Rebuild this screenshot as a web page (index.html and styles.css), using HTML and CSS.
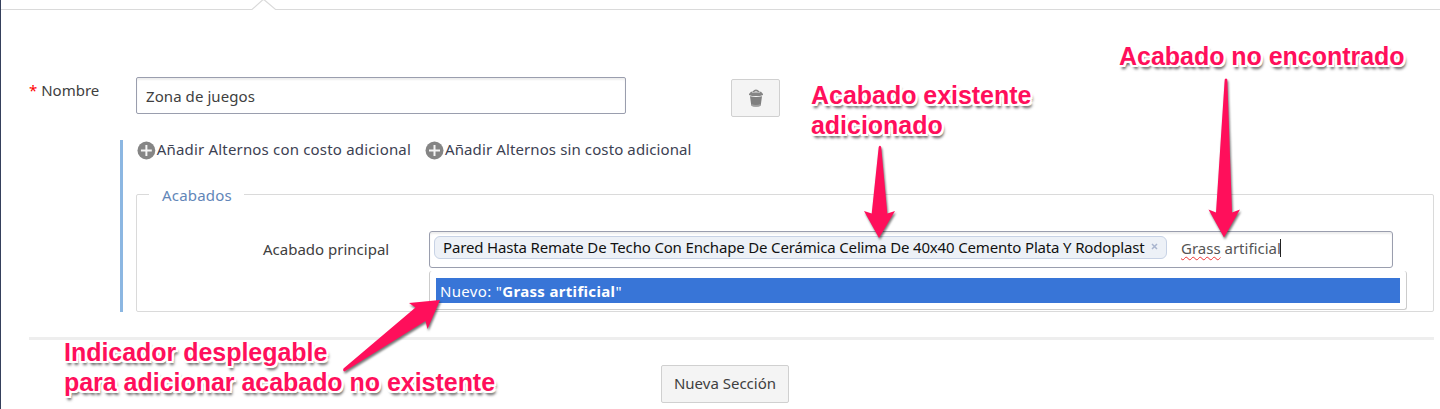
FILE: index.html
```html
<!DOCTYPE html>
<html lang="es">
<head>
<meta charset="utf-8">
<title>Acabados</title>
<link rel="stylesheet" href="styles.css">
</head>
<body>
<main class="page">
  <header class="tabline">
    <svg class="notch" width="28" height="11" viewBox="0 0 28 11"><path d="M1 11V9.500L4 8.500L14 0L24 8.500L27 9.500V11Z" fill="#fff"/><path d="M0 9.500H2L12 0.500Q13.500 -1 15 0.500L25.500 9.500H28" fill="none" stroke="#dadada" stroke-width="1.100"/></svg>
  </header>
  <div class="row">
    <label class="label"><span class="required">*</span> <span class="t-nombre">Nombre</span></label>
    <div class="field"><span class="t-zona">Zona de juegos</span></div>
    <button class="btn trash" aria-label="Eliminar">
      <svg width="16" height="20" viewBox="0 0 16 20"><path d="M5 4Q8 .5 11 4" fill="none" stroke="#858585" stroke-width="1.300"/><path d="M1 6L3 3.700H13L15 6V7L12 8H4L1 7Z" fill="#858585"/><path d="M4 4.500H12" stroke="#c4c4c4" stroke-width=".8"/><path d="M2 8.300Q8 9.800 14 8.300L12.800 17Q12.500 18.500 8 18.500Q3.500 18.500 3.200 17Z" fill="#808080"/><path d="M3.400 16Q8 18 12.600 16L12.300 18Q8 19.500 3.700 18Z" fill="#a0a0a0"/></svg>
    </button>
  </div>
  <section class="detail">
    <div class="links">
      <a class="link"><svg class="plus" width="19" height="19" viewBox="0 0 19 19"><circle cx="9.500" cy="9.500" r="9" fill="#858585"/><path d="M9.500 4V15M4 9.500H15" stroke="#f4f4f4" stroke-width="2"/></svg><span class="t-con">Añadir Alternos con costo adicional</span></a>
      <a class="link"><svg class="plus" width="19" height="19" viewBox="0 0 19 19"><circle cx="9.500" cy="9.500" r="9" fill="#858585"/><path d="M9.500 4V15M4 9.500H15" stroke="#f4f4f4" stroke-width="2"/></svg><span class="t-sin">Añadir Alternos sin costo adicional</span></a>
    </div>
    <div class="group">
      <span class="legend"><span class="t-acabados">Acabados</span></span>
      <span class="group-label"><span class="t-principal">Acabado principal</span></span>
      <div class="combo">
        <span class="tag"><span class="t-tag">Pared Hasta Remate De Techo Con Enchape De Cerámica Celima De 40x40 Cemento Plata Y Rodoplast</span><svg class="close" width="7" height="7" viewBox="0 0 7 7"><path d="M1 1L6 6M6 1L1 6" stroke="#a9b5cf" stroke-width="1.500"/></svg></span>
        <span class="typed"><span class="t-typed"><span class="misspelled">Grass</span> artificial</span></span><i class="caret"></i>
        <div class="dropdown"><div class="option"><span class="t-option">Nuevo: "<b>Grass artificial</b>"</span></div></div>
      </div>
    </div>
  </section>
  <hr class="rule">
  <div class="actions"><button class="btn new"><span class="t-new">Nueva Sección</span></button></div>
</main>
<div class="notes">
  <svg class="arrows" width="1440" height="409" viewBox="0 0 1440 409">
    <g fill="#ff0f5b">
      <path d="M878.700 147Q879.900 144.500 881.200 147L887.300 213.500L895 211L879 238L864 211L871.700 213.500Z"/>
      <path d="M1224.700 79.500Q1226 77.500 1227.300 79.500L1232 212.500L1240 209.500L1224 237.500L1208.500 209.500L1216 212.500Z"/>
      <path d="M344.500 371.500Q342.500 371 343.500 368.500L415.500 307.500L409 303L440 300L427.500 329L425.500 321Z"/>
    </g>
  </svg>
  <p class="note existing">Acabado existente<br>adicionado</p>
  <p class="note missing">Acabado no encontrado</p>
  <p class="note hint">Indicador desplegable<br>para adicionar acabado no existente</p>
</div>
</body>
</html>
```
FILE: styles.css
```css
* { box-sizing: border-box; }
body { margin: 0; background: #fff; color: #404040; font: 15px/20px "Noto Sans", "Open Sans", sans-serif; }
.page { height: 409px; overflow: hidden; border-left: 1px solid #35405c; }
.tabline { position: relative; height: 10px; border-bottom: 1px solid #dadada; }
.notch { position: absolute; left: 249px; top: 0; }
.row { display: flex; align-items: flex-start; margin-top: 67px; padding-left: 28px; }
.label { width: 107px; padding-top: 3px; white-space: nowrap; }
.required { color: #f00; }
.field { width: 490px; height: 37px; padding: 8px 9px 0; border: 1px solid #9a9eae; border-radius: 2px; box-shadow: inset 0 2px 2px #eee; }
.t-zona { letter-spacing: .07px; }
.btn { display: flex; align-items: center; justify-content: center; padding: 0; height: 38px; border: 1px solid #d0d0d0; border-radius: 2px; background: #f4f4f4; color: #404040; font: inherit; }
.trash { width: 49px; margin: 2px 0 0 105px; padding: 0 0 1px 1px; }
.detail { margin: 23px 6px 0 119px; border-left: 3px solid #8cb7e2; padding-left: 13px; height: 172px; }
.links { display: flex; gap: 14px; height: 54px; padding-left: 1px; color: #3c4152; line-height: 18px; }
.link { display: flex; white-space: nowrap; }
.plus { margin: 1px 1px 0 0; }
.link:first-child { width: 274px; }
.t-con { letter-spacing: .18px; }
.t-sin { letter-spacing: .11px; }
.group { position: relative; display: flex; height: 118px; border: 1px solid #dadada; border-radius: 2px; padding-top: 36px; }
.legend { position: absolute; left: 12px; top: -10px; width: 95px; padding-left: 13px; background: #fff; color: #6286b8; letter-spacing: .2px; }
.group-label { width: 292px; padding: 8px 0 0 126px; white-space: nowrap; }
.combo { position: relative; display: flex; width: 964px; height: 37px; padding: 4px; border: 1px solid #9a9eae; border-radius: 3px; box-shadow: inset 0 2px 2px #eee; }
.tag { display: flex; align-items: center; width: 733px; height: 23px; padding: 0 0 2px 8px; border: 1px solid #c7d2e5; border-radius: 6px; background: #edf1f7; color: #111; white-space: nowrap; }
.t-tag { width: 708px; letter-spacing: -.162px; }
.typed { width: 113px; padding: 2px 0 0 14px; white-space: nowrap; color: #555; }
.misspelled { text-decoration: underline wavy #e33 1px; text-underline-offset: 2px; text-decoration-skip-ink: none; }
.caret { width: 1px; height: 18px; margin-top: 3px; background: #222; }
.dropdown { position: absolute; left: -1px; top: 39px; width: 978px; height: 39px; padding: 7px 6px; border: 1px solid #ccc; border-top: 0; border-radius: 3px; background: #fff; }
.option { height: 25px; padding: 3px 4px; background: #3875d7; color: #fff; white-space: nowrap; }
.t-option { letter-spacing: .33px; }
.rule { height: 3px; margin: 25px 6px 25px 28px; border: 0; background: #eee; }
.actions { padding-left: 660px; }
.new { width: 128px; padding-bottom: 3px; }
.notes { position: absolute; inset: 0; overflow: hidden; }
.arrows { position: absolute; left: 0; top: 0; filter: drop-shadow(1px 2px 1px #0008); }
.note { position: absolute; margin: 0; font: bold 25px/30px "Liberation Sans", Arial, sans-serif; letter-spacing: -.03px; color: #ff0f5b; white-space: nowrap; text-shadow: -2px 0 #fff, 2px 0 #fff, 0 -2px #fff, 0 2px #fff, -2px -2px #fff, 2px -2px #fff, -2px 2px #fff, 2px 2px #fff, 2px 4px 3px #000a; }
.existing { left: 811px; top: 80px; }
.missing { left: 1119px; top: 41px; }
.hint { left: 64px; top: 337px; }
```
